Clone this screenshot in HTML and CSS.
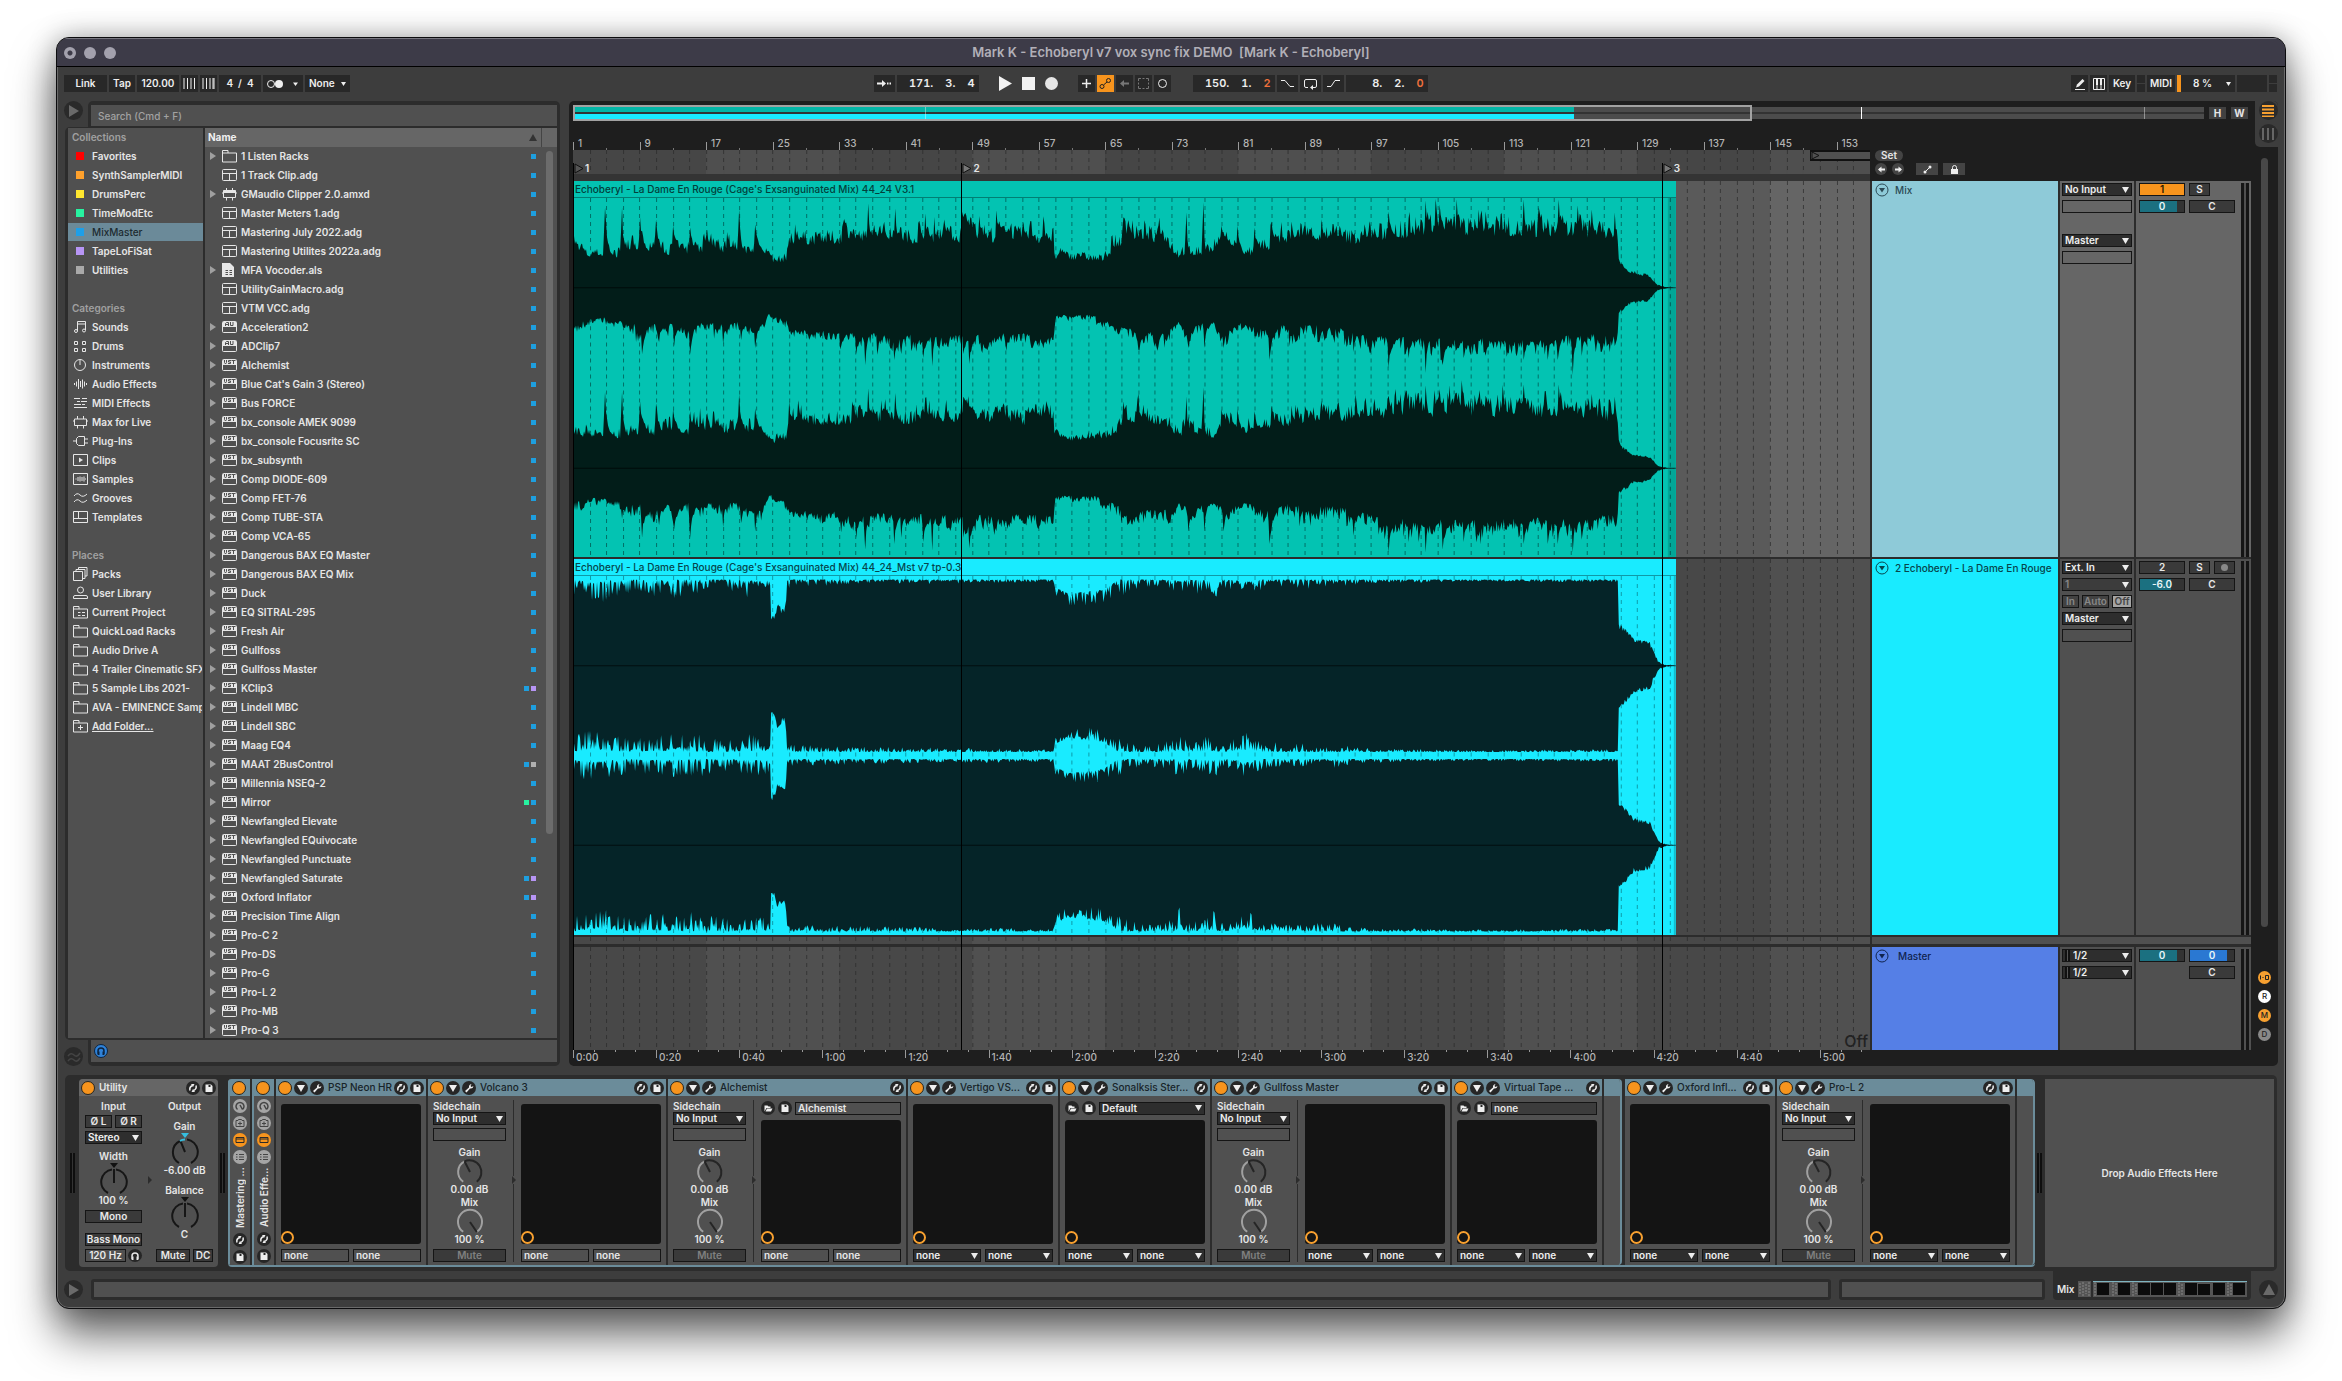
FILE: index.html
```html
<!DOCTYPE html>
<html lang="en">
<head>
<meta charset="utf-8">
<title>Mark K - Echoberyl v7 vox sync fix DEMO</title>
<link rel="stylesheet" href="styles.css">
</head>
<body>
<svg class="defs" aria-hidden="true">
  <symbol id="folder" viewBox="0 0 15 14"><path d="M.5 13V1.500h5.500v2.500h8.500V13zM.5 4H6" fill="none" stroke="currentColor"/></symbol>
  <symbol id="folder-plus" viewBox="0 0 15 14"><path d="M.5 13V1.500h5.500v2.500h8.500V13zM.5 4H6M5 8.500h5M7.500 6v5" fill="none" stroke="currentColor"/></symbol>
  <symbol id="project" viewBox="0 0 15 14"><path d="M.5 13V1.500h5.500v2.500h8.500V13zM.5 4H6M5 7.500h2.500M9 7.500h3M5 10.500h2.500M9 10.500h3" fill="none" stroke="currentColor"/></symbol>
  <symbol id="rack" viewBox="0 0 15 14"><path d="M.5 2.500q0-1 1-1h12q1 0 1 1v9q0 1-1 1h-12q-1 0-1-1zM.5 5.500h14M7.500 5.500v7" fill="none" stroke="currentColor"/></symbol>
  <symbol id="max" viewBox="0 0 15 14"><path d="M1.500 4h12v6.500h-12zM4.500 1v3M10.500 1v3M4.500 10.500v3M10.500 10.500v3M0 6h1.500M13.500 6H15" fill="none" stroke="currentColor"/></symbol>
  <symbol id="max-full" viewBox="0 0 15 14"><path d="M1.500 3.500h12v7h-12zM4.500 1v3M10.500 1v3M4.500 10.500v3M10.500 10.500v3M0 6h1.500M13.500 6H15" fill="none" stroke="currentColor"/><path d="M1.500 3.500h12V6h-12z" fill="currentColor"/></symbol>
  <symbol id="live-set" viewBox="0 0 15 14"><path d="M0 0h8l4 4v10H0z" fill="currentColor"/><path d="M3.500 7.500H6M7.500 7.500H10M3.500 9.500H6M7.500 9.500H10M3.500 11.500H6M7.500 11.500H10" stroke="#505050"/></symbol>
  <symbol id="vst" viewBox="0 0 15 14"><path d="M.5 2.500q0-1 1-1h12q1 0 1 1v9q0 1-1 1h-12q-1 0-1-1z" fill="none" stroke="currentColor"/><path d="M1 2h13v5H1z" fill="currentColor"/><path d="M2.500 2v2.500L3.500 6 4.500 4.500V2M9 2.500H6.500V4H8.500V5.500H6M9.500 2.500h4M11.500 2.500V6" fill="none" stroke="#505050"/></symbol>
  <symbol id="au" viewBox="0 0 15 14"><path d="M.5 2.500q0-1 1-1h12q1 0 1 1v9q0 1-1 1h-12q-1 0-1-1z" fill="none" stroke="currentColor"/><path d="M1 2h13v5H1z" fill="currentColor"/><path d="M3.500 6V3.500L4.500 2.500h2V6M3.500 4.500h3M8.500 2v3.500h2.500V2" fill="none" stroke="#505050"/></symbol>
  <symbol id="sounds" viewBox="0 0 15 14"><path d="M4.500 11V1.500h8V10M4.500 4h8" fill="none" stroke="currentColor"/><circle cx="3" cy="11" r="1.500" fill="none" stroke="currentColor"/><circle cx="11" cy="10.500" r="1.500" fill="none" stroke="currentColor"/></symbol>
  <symbol id="drums" viewBox="0 0 15 14"><path d="M1.500 2.500h3v3h-3zM9.500 2.500h3v3h-3zM1.500 9.500h3v3h-3zM9.500 9.500h3v3h-3z" fill="none" stroke="currentColor"/></symbol>
  <symbol id="instruments" viewBox="0 0 15 14"><circle cx="7" cy="7" r="5.500" fill="none" stroke="currentColor"/><path d="M7 1.500V7" stroke="currentColor"/></symbol>
  <symbol id="audio-fx" viewBox="0 0 15 14"><path d="M1.500 6v2M3.500 4.500v5M5.500 2v10M7.500 4v6M9.500 2.500v9M11.500 4.500v5M13.500 6v2" stroke="currentColor"/></symbol>
  <symbol id="midi-fx" viewBox="0 0 15 14"><path d="M1 2.500h6M9 2.500h5M4 5.500h3M8 5.500h6M1 8.500h7M9 8.500h3M1 11.500h13" stroke="currentColor"/></symbol>
  <symbol id="plugins" viewBox="0 0 15 14"><path d="M0 7h3.500M5.500 2.500h6v9h-6l-2-2v-5zM11.500 5H15M11.500 9H15" fill="none" stroke="currentColor"/></symbol>
  <symbol id="clips" viewBox="0 0 15 14"><path d="M.5 1.500h14v11H.5z" fill="none" stroke="currentColor"/><path d="M6 4.500L10 7 6 9.500z" fill="currentColor"/></symbol>
  <symbol id="samples" viewBox="0 0 15 14"><path d="M.5 1.500h14v11H.5zM3 6.500v1M5 5v4M7 4.500v5M9 5v4M11 4.500v5M12.500 6.500v1" fill="none" stroke="currentColor"/></symbol>
  <symbol id="grooves" viewBox="0 0 15 14"><path d="M1 5q3-4 6-1t7-1M1 11q3-4 6-1t7-1" fill="none" stroke="currentColor"/></symbol>
  <symbol id="templates" viewBox="0 0 15 14"><path d="M.5 1.500h14v11H.5zM.5 8.500h14M5.500 1.500v7" fill="none" stroke="currentColor"/></symbol>
  <symbol id="packs" viewBox="0 0 15 14"><path d="M.5 4.500h9v9h-9zM3 4.500V2.500h9v9H9.500M5.500 2.500V.5h8.500V9h-2" fill="none" stroke="currentColor"/></symbol>
  <symbol id="user" viewBox="0 0 15 14"><circle cx="7.500" cy="4" r="3" fill="none" stroke="currentColor"/><path d="M.5 12.500V11q0-1.500 1.500-1.500h11q1.500 0 1.500 1.500v1.500z" fill="none" stroke="currentColor"/></symbol>
  <symbol id="swap" viewBox="0 0 14 14"><circle cx="7" cy="7" r="7" fill="#262626"/><path d="M4 9.500Q3 6 6.500 4.500M10 4.500Q11 8 7.500 9.500" fill="none" stroke="#eee" stroke-width="1.500"/><path d="M5 3l3.500 0-1.500 3zM9 11H5.500L7 8z" fill="#eee"/></symbol>
  <symbol id="save" viewBox="0 0 14 14"><circle cx="7" cy="7" r="7" fill="#262626"/><path d="M3.500 3.500h5.500L10.500 5v6h-7z" fill="#eee"/><path d="M6.500 4h2v2h-2z" fill="#262626"/></symbol>
  <symbol id="open" viewBox="0 0 14 14"><circle cx="7" cy="7" r="7" fill="#262626"/><path d="M3.500 10.500v-6h3l1 1h2v1.500H5.500zM6 7.500h5.500L10 10.500H4.500z" fill="#eee"/></symbol>
  <symbol id="unfold" viewBox="0 0 14 14"><circle cx="7" cy="7" r="7" fill="#262626"/><path d="M3 4h8L7 11z" fill="#eee"/></symbol>
  <symbol id="wrench" viewBox="0 0 14 14"><circle cx="7" cy="7" r="7" fill="#262626"/><path d="M3 10l4-3.500Q6.500 3.500 9.500 3L8.500 5 9.500 6l2-1Q11 8 8 7.500L4.500 11.500z" fill="#eee"/></symbol>
  <symbol id="power" viewBox="0 0 14 14"><circle cx="7" cy="7" r="6.500" fill="#f7941d" stroke="#26251f"/></symbol>
  <symbol id="knob-gain" viewBox="0 0 28 28"><path d="M7.200 23.700A12 12 0 0 1 8.500 3.300" fill="none" stroke="#a0a0a0" stroke-width="2"/><path d="M8.500 3.300A12 12 0 0 1 20.800 23.700" fill="none" stroke="#252525" stroke-width="2"/><path d="M14 14L8.500 3.300" stroke="#252525" stroke-width="2"/></symbol>
  <symbol id="knob-mix" viewBox="0 0 28 28"><path d="M7.200 23.700A12 12 0 1 1 20.800 23.700" fill="none" stroke="#a0a0a0" stroke-width="2"/><path d="M14 14L20.800 24" stroke="#252525" stroke-width="2"/></symbol>
  <symbol id="knob-mid" viewBox="0 0 28 34"><path d="M10 0h8l-4 5z" fill="#111"/><path d="M8 30A12.500 12.500 0 0 1 12 6.500M20 30A12.500 12.500 0 0 0 16 6.500M14 6v14" fill="none" stroke="#161616" stroke-width="2"/></symbol>
  <symbol id="knob-out" viewBox="0 0 28 34"><path d="M10 0h8l-4 5z" fill="#36bfe0"/><path d="M8 30A12.500 12.500 0 0 1 9 8M20 30A12.500 12.500 0 0 0 16 6.500M9.500 8L14 19" fill="none" stroke="#161616" stroke-width="2"/><path d="M9 8Q11 6.500 14 6.500" fill="none" stroke="#36bfe0" stroke-width="2"/></symbol>
  <symbol id="m-dial" viewBox="0 0 14 14"><circle cx="7" cy="7" r="7" fill="#a5a5a5"/><path d="M4.500 10.500A4 4 0 1 1 9.500 10.500M7 6l2.500 4.500" fill="none" stroke="#444" stroke-width="1.500"/></symbol>
  <symbol id="m-plus" viewBox="0 0 14 14"><circle cx="7" cy="7" r="7" fill="#a5a5a5"/><path d="M3 4.500h2l.5-1h3l.5 1h2v6H3zM7 5.500v4M5 7.500h4" fill="none" stroke="#444"/></symbol>
  <symbol id="m-dev" viewBox="0 0 14 14"><circle cx="7" cy="7" r="7" fill="#f7941d"/><path d="M3 4.500h8v5H3zM3 6h8" fill="none" stroke="#2a2a2a"/></symbol>
  <symbol id="m-list" viewBox="0 0 14 14"><circle cx="7" cy="7" r="7" fill="#a5a5a5"/><path d="M3 4.500h1.500M6 4.500h5M3 7h1.500M6 7h5M3 9.500h1.500M6 9.500h5" stroke="#444"/></symbol>
  <symbol id="fold" viewBox="0 0 14 14"><circle cx="7" cy="7" r="6" fill="none" stroke="currentColor"/><path d="M4 5h6l-3 4.500z" fill="currentColor"/></symbol>
  <symbol id="phones" viewBox="0 0 14 14"><path d="M4 10.500V7a3 3 0 0 1 6 0v3.500" fill="none" stroke="currentColor" stroke-width="1.500"/><path d="M4 7.500h1.500v3.500H4zM8.500 7.500H10v3.500H8.500z" fill="currentColor"/></symbol>
</svg>

<main class="window">
  <header class="titlebar">
    <span class="lights"><i></i><i></i><i></i></span>
    <h1>Mark K - Echoberyl v7 vox sync fix DEMO&nbsp; [Mark K - Echoberyl]</h1>
  </header>

  <nav class="toolbar" aria-label="Transport">
    <div class="group">
      <button class="tb w43">Link</button><button class="tb w26">Tap</button><button class="tb w42">120.00</button>
      <button class="tb w17" aria-label="Nudge down"><svg width="13" height="11"><path d="M1 0v11M4.500 0v11M8 0v11M11.500 0v11" stroke="#eee"/></svg></button>
      <button class="tb w17" aria-label="Nudge up"><svg width="13" height="11"><path d="M1 0v11M4.500 0v11M8 0v11M11 0v11" stroke="#eee"/><path d="M12 0v11" stroke="#eee"/></svg></button>
      <button class="tb w42">4&nbsp; /&nbsp; 4</button>
      <button class="tb w40" aria-label="Metronome"><svg width="34" height="10"><circle cx="5" cy="5" r="3.500" fill="none" stroke="#eee"/><circle cx="13" cy="5" r="4" fill="#eee"/><path d="M27 3.500h5l-2.500 3.500z" fill="#eee"/></svg></button>
      <select class="tb w45 sel-small" aria-label="Quantization"><option>None</option></select>
    </div>
    <div class="group center">
      <button class="tb w21" aria-label="Follow"><svg width="15" height="9"><path d="M0 4.500h7" stroke="#eee" stroke-width="2"/><path d="M5 1l4 3.500L5 8z" fill="#eee"/><path d="M10 4.500h1.500M12.500 4.500H14" stroke="#eee" stroke-width="2"/></svg></button>
      <button class="tb w82 num"><span>171.</span><span>3.</span><span>4</span></button>
      <span class="transport">
        <button class="bare" aria-label="Play"><svg width="13" height="15"><path d="M0 0l13 7.500L0 15z" fill="#f2f2f2"/></svg></button>
        <button class="bare" aria-label="Stop"><svg width="13" height="13"><path d="M0 0h13v13H0z" fill="#f2f2f2"/></svg></button>
        <button class="bare" aria-label="Record"><svg width="13" height="13"><circle cx="6.500" cy="6.500" r="6.500" fill="#e6e6e6"/></svg></button>
      </span>
      <button class="tb w17" aria-label="Overdub"><svg width="9" height="9"><path d="M4.500 0v9M0 4.500h9" stroke="#eee" stroke-width="1.500"/></svg></button>
      <button class="tb w17 on" aria-label="Automation arm"><svg width="13" height="13"><circle cx="3" cy="9.500" r="2" fill="none" stroke="#222"/><circle cx="9.500" cy="3.500" r="2" fill="none" stroke="#222"/><path d="M4.500 8L8 5" stroke="#222"/></svg></button>
      <button class="tb w17" aria-label="Re-enable automation"><svg width="11" height="9"><path d="M3 4.500h7" stroke="#777" stroke-width="2"/><path d="M5 1L1 4.500 5 8z" fill="#777"/></svg></button>
      <button class="tb w17" aria-label="Capture"><svg width="11" height="11"><path d="M.5 3V.5H3M8 .5h2.500V3M10.500 8v2.500H8M3 10.500H.5V8M4.500.5h2M4.500 10.500h2M.5 4.500v2M10.500 4.500v2" fill="none" stroke="#777"/></svg></button>
      <button class="tb w17" aria-label="Session record"><svg width="11" height="11"><circle cx="5.500" cy="5.500" r="4" fill="none" stroke="#eee"/></svg></button>
      <button class="tb w82 num loopstart"><span>150.</span><span>1.</span><span class="red">2</span></button>
      <button class="tb w21" aria-label="Punch in"><svg width="15" height="9"><path d="M1 1.500h4l5 6h4" fill="none" stroke="#eee"/></svg></button>
      <button class="tb w21" aria-label="Loop"><svg width="15" height="12"><path d="M5 9.500H3q-1.500 0-1.500-1.500V3Q1.500 1.500 3 1.500h9q1.500 0 1.500 1.500v5q0 1.500-1.500 1.500h-3" fill="none" stroke="#eee"/><path d="M10 7v5L7 9.500z" fill="#eee"/></svg></button>
      <button class="tb w21" aria-label="Punch out"><svg width="15" height="9"><path d="M1 7.500h4l4-6h5" fill="none" stroke="#eee"/></svg></button>
      <button class="tb w82 num"><span>8.</span><span>2.</span><span class="red">0</span></button>
    </div>
    <div class="group right">
      <button class="tb w17" aria-label="Draw"><svg width="12" height="12"><path d="M1 11.500h10" stroke="#eee"/><path d="M2 9.500L3 6.500 8.500 1l2 2L5 8.500z" fill="#eee"/></svg></button>
      <button class="tb w17" aria-label="Computer keyboard"><svg width="12" height="12"><path d="M.5.5h11v11H.5zM4 6v6M8 6v6" fill="none" stroke="#eee"/><path d="M3 0h2v7H3zM7 0h2v7H7z" fill="#eee"/></svg></button>
      <button class="tb w26">Key</button>
      <button class="tb w8 split" aria-label="Key indicator"></button>
      <button class="tb w28">MIDI</button>
      <select class="tb w58 sel-small cpu" aria-label="CPU load"><option>8 %</option></select>
      <button class="tb w30" aria-label="Disk overload"></button>
      <button class="tb w8 split" aria-label="MIDI indicator"></button>
    </div>
  </nav>

  <section class="main">
    <aside class="browser">
      <div class="search-row">
        <button class="round" aria-label="Hide browser"><svg width="12" height="12"><path d="M1 0l10 6L1 12z" fill="#6a6a6a"/></svg></button>
        <div class="frame-top"><input type="search" aria-label="Search" placeholder="Search (Cmd + F)"></div>
      </div>
      <div class="lists">
        <div class="places">
          <h2>Collections</h2>
          <ul>
            <li><i class="chip red-c"></i>Favorites</li><li><i class="chip orange-c"></i>SynthSamplerMIDI</li><li><i class="chip yellow-c"></i>DrumsPerc</li><li><i class="chip green-c"></i>TimeModEtc</li><li class="picked"><i class="chip blue-c"></i>MixMaster</li><li><i class="chip purple-c"></i>TapeLoFiSat</li><li><i class="chip gray-c"></i>Utilities</li>
          </ul>
          <h2>Categories</h2>
          <ul>
            <li><svg><use href="#sounds"/></svg>Sounds</li><li><svg><use href="#drums"/></svg>Drums</li><li><svg><use href="#instruments"/></svg>Instruments</li><li><svg><use href="#audio-fx"/></svg>Audio Effects</li><li><svg><use href="#midi-fx"/></svg>MIDI Effects</li><li><svg><use href="#max"/></svg>Max for Live</li><li><svg><use href="#plugins"/></svg>Plug-Ins</li><li><svg><use href="#clips"/></svg>Clips</li><li><svg><use href="#samples"/></svg>Samples</li><li><svg><use href="#grooves"/></svg>Grooves</li><li><svg><use href="#templates"/></svg>Templates</li>
          </ul>
          <h2>Places</h2>
          <ul>
            <li><svg><use href="#packs"/></svg>Packs</li><li><svg><use href="#user"/></svg>User Library</li><li><svg><use href="#project"/></svg>Current Project</li><li><svg><use href="#folder"/></svg>QuickLoad Racks</li><li><svg><use href="#folder"/></svg>Audio Drive A</li><li><svg><use href="#folder"/></svg><span>4 Trailer Cinematic SFX</span></li><li><svg><use href="#folder"/></svg>5 Sample Libs 2021-</li><li><svg><use href="#folder"/></svg><span>AVA - EMINENCE Samp</span></li><li><svg><use href="#folder-plus"/></svg><a href="#add">Add Folder...</a></li>
          </ul>
        </div>
        <div class="files">
          <div class="files-head"><span>Name</span><i class="sort"></i><i class="corner"></i></div>
          <ul>
            <li class="x"><svg><use href="#folder"/></svg>1 Listen Racks<i class="tag"></i></li>
            <li><svg><use href="#rack"/></svg>1 Track Clip.adg<i class="tag"></i></li>
            <li class="x"><svg><use href="#max-full"/></svg>GMaudio Clipper 2.0.amxd<i class="tag"></i></li>
            <li><svg><use href="#rack"/></svg>Master Meters 1.adg<i class="tag"></i></li>
            <li><svg><use href="#rack"/></svg>Mastering July 2022.adg<i class="tag"></i></li>
            <li><svg><use href="#rack"/></svg>Mastering Utilites 2022a.adg<i class="tag"></i></li>
            <li class="x"><svg><use href="#live-set"/></svg>MFA Vocoder.als<i class="tag"></i></li>
            <li><svg><use href="#rack"/></svg>UtilityGainMacro.adg<i class="tag"></i></li>
            <li><svg><use href="#rack"/></svg>VTM VCC.adg<i class="tag"></i></li>
            <li class="x"><svg><use href="#au"/></svg>Acceleration2<i class="tag"></i></li>
            <li class="x"><svg><use href="#au"/></svg>ADClip7<i class="tag"></i></li>
            <li class="x"><svg><use href="#vst"/></svg>Alchemist<i class="tag"></i></li>
            <li class="x"><svg><use href="#vst"/></svg>Blue Cat's Gain 3 (Stereo)<i class="tag"></i></li>
            <li class="x"><svg><use href="#vst"/></svg>Bus FORCE<i class="tag"></i></li>
            <li class="x"><svg><use href="#vst"/></svg>bx_console AMEK 9099<i class="tag"></i></li>
            <li class="x"><svg><use href="#vst"/></svg>bx_console Focusrite SC<i class="tag"></i></li>
            <li class="x"><svg><use href="#vst"/></svg>bx_subsynth<i class="tag"></i></li>
            <li class="x"><svg><use href="#vst"/></svg>Comp DIODE-609<i class="tag"></i></li>
            <li class="x"><svg><use href="#vst"/></svg>Comp FET-76<i class="tag"></i></li>
            <li class="x"><svg><use href="#vst"/></svg>Comp TUBE-STA<i class="tag"></i></li>
            <li class="x"><svg><use href="#vst"/></svg>Comp VCA-65<i class="tag"></i></li>
            <li class="x"><svg><use href="#vst"/></svg>Dangerous BAX EQ Master<i class="tag"></i></li>
            <li class="x"><svg><use href="#vst"/></svg>Dangerous BAX EQ Mix<i class="tag"></i></li>
            <li class="x"><svg><use href="#vst"/></svg>Duck<i class="tag"></i></li>
            <li class="x"><svg><use href="#vst"/></svg>EQ SITRAL-295<i class="tag"></i></li>
            <li class="x"><svg><use href="#vst"/></svg>Fresh Air<i class="tag"></i></li>
            <li class="x"><svg><use href="#vst"/></svg>Gullfoss<i class="tag"></i></li>
            <li class="x"><svg><use href="#vst"/></svg>Gullfoss Master<i class="tag"></i></li>
            <li class="x"><svg><use href="#vst"/></svg>KClip3<i class="tag"></i><i class="tag purple-c"></i></li>
            <li class="x"><svg><use href="#vst"/></svg>Lindell MBC<i class="tag"></i></li>
            <li class="x"><svg><use href="#vst"/></svg>Lindell SBC<i class="tag"></i></li>
            <li class="x"><svg><use href="#vst"/></svg>Maag EQ4<i class="tag"></i></li>
            <li class="x"><svg><use href="#vst"/></svg>MAAT 2BusControl<i class="tag"></i><i class="tag gray-c"></i></li>
            <li class="x"><svg><use href="#vst"/></svg>Millennia NSEQ-2<i class="tag"></i></li>
            <li class="x"><svg><use href="#vst"/></svg>Mirror<i class="tag green-c"></i><i class="tag"></i></li>
            <li class="x"><svg><use href="#vst"/></svg>Newfangled Elevate<i class="tag"></i></li>
            <li class="x"><svg><use href="#vst"/></svg>Newfangled EQuivocate<i class="tag"></i></li>
            <li class="x"><svg><use href="#vst"/></svg>Newfangled Punctuate<i class="tag"></i></li>
            <li class="x"><svg><use href="#vst"/></svg>Newfangled Saturate<i class="tag"></i><i class="tag purple-c"></i></li>
            <li class="x"><svg><use href="#vst"/></svg>Oxford Inflator<i class="tag"></i><i class="tag purple-c"></i></li>
            <li class="x"><svg><use href="#vst"/></svg>Precision Time Align<i class="tag"></i></li>
            <li class="x"><svg><use href="#vst"/></svg>Pro-C 2<i class="tag"></i></li>
            <li class="x"><svg><use href="#vst"/></svg>Pro-DS<i class="tag"></i></li>
            <li class="x"><svg><use href="#vst"/></svg>Pro-G<i class="tag"></i></li>
            <li class="x"><svg><use href="#vst"/></svg>Pro-L 2<i class="tag"></i></li>
            <li class="x"><svg><use href="#vst"/></svg>Pro-MB<i class="tag"></i></li>
            <li class="x"><svg><use href="#vst"/></svg>Pro-Q 3<i class="tag"></i></li>
          </ul>
          <i class="thumb"></i>
        </div>
      </div>
      <div class="preview-row">
        <button class="round" aria-label="Groove pool"><svg width="14" height="12"><path d="M1 5q3-4 6-1t6-2M1 10q3-4 6-1t6-2" fill="none" stroke="#444" stroke-width="1.500"/></svg></button>
        <div class="frame-bottom"><div class="preview"><button class="phones" aria-label="Preview"><svg width="14" height="14"><use href="#phones"/></svg></button></div></div>
      </div>
    </aside>

    <section class="arrange">
      <div class="arr-body">
        <div class="overview-row">
          <div class="overview">
            <i class="ov-lane teal"></i><i class="ov-lane cyan"></i>
            <i class="ov-tick t1"></i><i class="ov-tick t2"></i><i class="ov-tick t3"></i><i class="ov-view"></i>
          </div>
          <button class="hw">H</button><button class="hw">W</button>
        </div>
        <div class="grid">
          <div class="ruler" id="bars"></div>
          <div class="scrub"><svg class="lanes" id="scrub" viewBox="0 0 1296 24" preserveAspectRatio="none"></svg></div>
          <div class="locator-tools">
            <button class="set">Set</button>
            <div class="loc-row">
              <button class="dot" aria-label="Previous locator"><svg width="11" height="11"><path d="M3 5.500h6" stroke="#eee" stroke-width="2"/><path d="M5.500 2.500L2 5.500l3.500 3z" fill="#eee"/></svg></button>
              <button class="dot" aria-label="Next locator"><svg width="11" height="11"><path d="M2 5.500h6" stroke="#eee" stroke-width="2"/><path d="M5.500 2.500L9 5.500l-3.500 3z" fill="#eee"/></svg></button>
              <button class="sq auto" aria-label="Automation mode"><svg width="9" height="9"><circle cx="2" cy="7" r="1.500" fill="#eee"/><circle cx="7" cy="2" r="1.500" fill="#eee"/><path d="M2 7l5-5" stroke="#eee"/></svg></button>
              <button class="sq" aria-label="Lock envelopes"><svg width="9" height="9"><path d="M1 4h7v5H1z" fill="#eee"/><path d="M2.500 4V2.500a2 2 0 0 1 4 0V4" fill="none" stroke="#eee"/></svg></button>
            </div>
          </div>

          <div class="lane lane1">
            <svg class="lanes" id="lane1" viewBox="0 0 1296 375" preserveAspectRatio="none"></svg>
            <div class="clip teal-clip"><span class="clip-name">Echoberyl - La Dame En Rouge (Cage's Exsanguinated Mix) 44_24 V3.1</span><svg class="wave" id="wave1" viewBox="0 0 1102 358" preserveAspectRatio="none"></svg></div>
          </div>
          <div class="head head-mix"><svg class="fold"><use href="#fold"/></svg><span>Mix</span></div>
          <div class="io sel-track">
            <select aria-label="Mix input"><option>No Input</option></select><i class="empty"></i><i class="spacer"></i>
            <select aria-label="Mix output"><option>Master</option></select><i class="empty"></i>
          </div>
          <div class="mixer sel-track">
            <div class="mx">
              <button class="box act">1</button><button class="box s">S</button><i></i>
              <button class="box vol v83">0</button><button class="box c">C</button>
            </div><i class="meter"></i>
          </div>

          <div class="lane lane2">
            <svg class="lanes" id="lane2" viewBox="0 0 1296 375" preserveAspectRatio="none"></svg>
            <div class="clip cyan-clip"><span class="clip-name">Echoberyl - La Dame En Rouge (Cage's Exsanguinated Mix) 44_24_Mst v7 tp-0.3</span><svg class="wave" id="wave2" viewBox="0 0 1102 358" preserveAspectRatio="none"></svg></div>
          </div>
          <div class="head head-cyan"><svg class="fold"><use href="#fold"/></svg><span>2 Echoberyl - La Dame En Rouge</span></div>
          <div class="io">
            <select aria-label="Track 2 input"><option>Ext. In</option></select>
            <select class="dim" aria-label="Track 2 channel"><option>1</option></select>
            <div class="monitor"><button class="box dim">In</button><button class="box dim">Auto</button><button class="box off">Off</button></div>
            <select aria-label="Track 2 output"><option>Master</option></select><i class="empty"></i>
          </div>
          <div class="mixer">
            <div class="mx">
              <button class="box">2</button><button class="box s">S</button><button class="box s" aria-label="Arm"><i class="arm"></i></button>
              <button class="box vol v70">-6.0</button><button class="box c">C</button>
            </div><i class="meter"></i>
          </div>

          <div class="strip"><svg class="lanes" id="strip" viewBox="0 0 1296 7" preserveAspectRatio="none"></svg></div>
          <div class="strip rest"></div>

          <div class="lane master">
            <svg class="lanes" id="lane3" viewBox="0 0 1296 103" preserveAspectRatio="none"></svg>
            <span class="off-label">Off</span>
          </div>
          <div class="head head-master"><svg class="fold"><use href="#fold"/></svg><span>Master</span></div>
          <div class="io">
            <select class="out" aria-label="Cue out"><option>1/2</option></select>
            <select class="out" aria-label="Master out"><option>1/2</option></select>
          </div>
          <div class="mixer">
            <div class="mx">
              <button class="box vol v83">0</button><button class="box vol blue c">0</button>
              <i></i><button class="box c">C</button>
            </div><i class="meter"></i>
          </div>
          <div class="time" id="time"></div>

          <div class="overlay" id="overlay">
            <i class="loop-brace"><svg width="10" height="9"><path d="M1 0l7 3.500L1 7z" fill="none" stroke="#111"/></svg></i>
            <div class="locator first"><svg width="10" height="11"><path d="M1 1l8 4.500L1 10z" fill="#555" stroke="#111"/></svg><span>1</span></div>
            <div class="locator second"><svg width="10" height="11"><path d="M1 1l8 4.500L1 10z" fill="#777" stroke="#111"/></svg><span>2</span></div>
            <div class="locator third"><svg width="10" height="11"><path d="M1 1l8 4.500L1 10z" fill="#777" stroke="#111"/></svg><span>3</span></div>
          </div>
        </div>
      </div>
      <div class="rail">
        <div class="views">
          <button class="round" aria-label="Arrangement view"><svg width="12" height="12"><path d="M0 1h12M0 4.500h12M0 8h12M0 11.500h12" stroke="#f7a030" stroke-width="2"/></svg></button>
          <button class="round" aria-label="Session view"><svg width="12" height="12"><path d="M1 0v12M6 0v12M11 0v12" stroke="#666" stroke-width="2"/></svg></button>
        </div>
        <i class="rail-thumb"></i>
        <button class="opt orange" aria-label="Show I/O"><svg width="13" height="13"><path d="M2.500 4.500v4M4.500 6.500h1M7.500 4.500h3v4h-3z" fill="none" stroke="#222"/></svg></button>
        <button class="opt white">R</button>
        <button class="opt orange">M</button>
        <button class="opt gray">D</button>
      </div>
    </section>
  </section>

  <section class="devices">
    <i class="lvl"></i>
    <article class="utility">
      <header><svg><use href="#power"/></svg><b>Utility</b><svg><use href="#swap"/></svg><svg><use href="#save"/></svg></header>
      <div class="u-body">
        <div class="u-col left">
          <span class="lab">Input</span>
          <div class="pair"><button class="box">Ø L</button><button class="box">Ø R</button></div>
          <select aria-label="Channel mode"><option>Stereo</option></select>
          <span class="lab up">Width</span>
          <svg class="knob tall"><use href="#knob-mid"/></svg>
          <span class="lab">100 %</span>
          <button class="box mono">Mono</button>
          <button class="box bass">Bass Mono</button>
          <div class="pair"><button class="box hz">120 Hz</button><button class="dot" aria-label="Audition"><svg width="14" height="14"><use href="#phones"/></svg></button></div>
        </div>
        <i class="divider"></i>
        <div class="u-col rightc">
          <span class="lab">Output</span>
          <span class="lab up">Gain</span>
          <svg class="knob tall"><use href="#knob-out"/></svg>
          <span class="lab">-6.00 dB</span>
          <span class="lab up">Balance</span>
          <svg class="knob tall"><use href="#knob-mid"/></svg>
          <span class="lab">C</span>
          <div class="pair end"><button class="box">Mute</button><button class="box dc">DC</button></div>
        </div>
      </div>
    </article>
    <i class="lvl"></i>

    <div class="outer-rack">
      <div class="rack-strip"><header><svg><use href="#power"/></svg></header>
        <svg><use href="#m-dial"/></svg><svg><use href="#m-plus"/></svg><svg><use href="#m-dev"/></svg><svg><use href="#m-list"/></svg>
        <b>Mastering ...</b><svg><use href="#swap"/></svg><svg><use href="#save"/></svg></div>
      <div class="rack-strip"><header><svg><use href="#power"/></svg></header>
        <svg><use href="#m-dial"/></svg><svg><use href="#m-plus"/></svg><svg><use href="#m-dev"/></svg><svg><use href="#m-list"/></svg>
        <b>Audio Effe...</b><svg><use href="#swap"/></svg><svg><use href="#save"/></svg></div>

      <article class="dev"><header><svg><use href="#power"/></svg><svg><use href="#unfold"/></svg><svg><use href="#wrench"/></svg><b>PSP Neon HR</b><svg><use href="#swap"/></svg><svg><use href="#save"/></svg></header>
        <div class="d-body"><div class="plug"><div class="pad"><i></i></div><div class="pair"><span class="field">none</span><span class="field">none</span></div></div></div></article>

      <article class="dev"><header><svg><use href="#power"/></svg><svg><use href="#unfold"/></svg><svg><use href="#wrench"/></svg><b>Volcano 3</b><svg><use href="#swap"/></svg><svg><use href="#save"/></svg></header>
        <div class="d-body"><div class="side"><span class="lab l">Sidechain</span><select aria-label="Volcano sidechain"><option>No Input</option></select><i class="empty"></i><span class="lab g">Gain</span><svg class="knob"><use href="#knob-gain"/></svg><span class="lab v">0.00 dB</span><span class="lab">Mix</span><svg class="knob"><use href="#knob-mix"/></svg><span class="lab v">100 %</span><button class="box mute">Mute</button></div><i class="divider"></i>
        <div class="plug"><div class="pad"><i></i></div><div class="pair"><span class="field">none</span><span class="field">none</span></div></div></div></article>

      <article class="dev"><header><svg><use href="#power"/></svg><svg><use href="#unfold"/></svg><svg><use href="#wrench"/></svg><b>Alchemist</b><svg><use href="#swap"/></svg></header>
        <div class="d-body"><div class="side"><span class="lab l">Sidechain</span><select aria-label="Alchemist sidechain"><option>No Input</option></select><i class="empty"></i><span class="lab g">Gain</span><svg class="knob"><use href="#knob-gain"/></svg><span class="lab v">0.00 dB</span><span class="lab">Mix</span><svg class="knob"><use href="#knob-mix"/></svg><span class="lab v">100 %</span><button class="box mute">Mute</button></div><i class="divider"></i>
        <div class="plug"><div class="preset"><svg><use href="#open"/></svg><svg><use href="#save"/></svg><span class="field">Alchemist</span></div><div class="pad"><i></i></div><div class="pair"><span class="field">none</span><span class="field">none</span></div></div></div></article>

      <article class="dev"><header><svg><use href="#power"/></svg><svg><use href="#unfold"/></svg><svg><use href="#wrench"/></svg><b>Vertigo VS...</b><svg><use href="#swap"/></svg><svg><use href="#save"/></svg></header>
        <div class="d-body"><div class="plug"><div class="pad"><i></i></div><div class="pair"><select aria-label="Vertigo X"><option>none</option></select><select aria-label="Vertigo Y"><option>none</option></select></div></div></div></article>

      <article class="dev"><header><svg><use href="#power"/></svg><svg><use href="#unfold"/></svg><svg><use href="#wrench"/></svg><b>Sonalksis Ster...</b><svg><use href="#swap"/></svg></header>
        <div class="d-body"><div class="plug"><div class="preset"><svg><use href="#open"/></svg><svg><use href="#save"/></svg><select aria-label="Sonalksis preset"><option>Default</option></select></div><div class="pad"><i></i></div><div class="pair"><select aria-label="Sonalksis X"><option>none</option></select><select aria-label="Sonalksis Y"><option>none</option></select></div></div></div></article>

      <article class="dev"><header><svg><use href="#power"/></svg><svg><use href="#unfold"/></svg><svg><use href="#wrench"/></svg><b>Gullfoss Master</b><svg><use href="#swap"/></svg><svg><use href="#save"/></svg></header>
        <div class="d-body"><div class="side"><span class="lab l">Sidechain</span><select aria-label="Gullfoss sidechain"><option>No Input</option></select><i class="empty"></i><span class="lab g">Gain</span><svg class="knob"><use href="#knob-gain"/></svg><span class="lab v">0.00 dB</span><span class="lab">Mix</span><svg class="knob"><use href="#knob-mix"/></svg><span class="lab v">100 %</span><button class="box mute">Mute</button></div><i class="divider"></i>
        <div class="plug"><div class="pad"><i></i></div><div class="pair"><select aria-label="Gullfoss X"><option>none</option></select><select aria-label="Gullfoss Y"><option>none</option></select></div></div></div></article>

      <article class="dev"><header><svg><use href="#power"/></svg><svg><use href="#unfold"/></svg><svg><use href="#wrench"/></svg><b>Virtual Tape ...</b><svg><use href="#swap"/></svg></header>
        <div class="d-body"><div class="plug"><div class="preset"><svg><use href="#open"/></svg><svg><use href="#save"/></svg><span class="field dark">none</span></div><div class="pad"><i></i></div><div class="pair"><select aria-label="Tape X"><option>none</option></select><select aria-label="Tape Y"><option>none</option></select></div></div></div></article>

      <div class="cap"><header></header></div>

      <article class="dev"><header><svg><use href="#power"/></svg><svg><use href="#unfold"/></svg><svg><use href="#wrench"/></svg><b>Oxford Infl...</b><svg><use href="#swap"/></svg><svg><use href="#save"/></svg></header>
        <div class="d-body"><div class="plug"><div class="pad"><i></i></div><div class="pair"><select aria-label="Oxford X"><option>none</option></select><select aria-label="Oxford Y"><option>none</option></select></div></div></div></article>

      <article class="dev"><header><svg><use href="#power"/></svg><svg><use href="#unfold"/></svg><svg><use href="#wrench"/></svg><b>Pro-L 2</b><svg><use href="#swap"/></svg><svg><use href="#save"/></svg></header>
        <div class="d-body"><div class="side"><span class="lab l">Sidechain</span><select aria-label="Pro-L sidechain"><option>No Input</option></select><i class="empty"></i><span class="lab g">Gain</span><svg class="knob"><use href="#knob-gain"/></svg><span class="lab v">0.00 dB</span><span class="lab">Mix</span><svg class="knob"><use href="#knob-mix"/></svg><span class="lab v">100 %</span><button class="box mute">Mute</button></div><i class="divider"></i>
        <div class="plug"><div class="pad"><i></i></div><div class="pair"><select aria-label="Pro-L X"><option>none</option></select><select aria-label="Pro-L Y"><option>none</option></select></div></div></div></article>

      <div class="cap last"><header></header></div>
    </div>
    <i class="lvl"></i>
    <div class="drop">Drop Audio Effects Here</div>
  </section>

  <footer class="status">
    <button class="round" aria-label="Info view"><svg width="12" height="12"><path d="M1 0l10 6L1 12z" fill="#6a6a6a"/></svg></button>
    <div class="msg"></div><div class="msg small"></div>
    <div class="chain"><span>Mix</span>
      <svg width="169" height="16"><path d="M0 0h13v16H0zM15 0h154v16H15z" fill="#555"/><path d="M2 2v12M5 1v14M8 3v10M11 1v14M17 1v15M35 1v14M38 2v12M55 1v14M58 3v10M101 1v14M104 3v11M150 1v14M153 3v11" stroke="#888" stroke-dasharray="2 1"/><path d="M15 .5h154" stroke="#7db4c0"/><path d="M19 2h12v12H19zM40 2h12v12H40zM60 2h12v12H60zM73 2h12v12H73zM86 2h12v12H86zM107 2h12v12H107zM120 3h12v11H120zM135 2h12v12h-12zM155 2h12v12h-12z" fill="#0c0c0c"/></svg>
    </div>
    <button class="round" aria-label="Hide detail view"><svg width="12" height="12"><path d="M6 0l6 11H0z" fill="#6a6a6a"/></svg></button>
  </footer>
</main>
<script src="app.js"></script>
</body>
</html>
```
FILE: styles.css
```css
* { box-sizing: border-box; }
html { background: #fff; }
body { margin: 0; padding: 37px 56px 72px; font: 500 10px/13px Inter, "Liberation Sans", sans-serif; color: #e6e6e6; }
button, select, input { font: inherit; color: inherit; margin: 0; padding: 0; border: 0; border-radius: 0; background: none; }
button { display: flex; align-items: center; justify-content: center; white-space: nowrap; }
h1, h2, ul { margin: 0; padding: 0; font: inherit; list-style: none; }
svg { display: block; flex: none; }
.defs { position: absolute; width: 0; height: 0; }

.window { height: calc(100vh - 109px); min-height: 1100px; display: flex; flex-direction: column; background: #3d3d3d; border: 1px solid #0c0c0e; border-radius: 13px; overflow: hidden; box-shadow: 0 26px 44px rgba(0, 0, 0, .6), 0 0 28px rgba(0, 0, 0, .3), inset 0 0 0 1px #6a6a6a; }
.titlebar { height: 29px; flex: none; position: relative; background: #3d3b48; border-top: 1px solid #77767f; border-bottom: 1px solid #000; display: flex; align-items: center; justify-content: center; }
.titlebar h1 { font-size: 13px; font-weight: 600; color: #b2b0b8; }
.lights { position: absolute; left: 7px; display: flex; gap: 8px; }
.lights i { width: 12px; height: 12px; border-radius: 50%; background: #a3a1ad; }
.lights i:first-child { background: radial-gradient(circle, #3d3b48 0 2px, #a3a1ad 3px); }

.toolbar { flex: none; padding: 8px 8px 9px 7px; display: grid; grid-template-columns: 1fr auto 1fr; }
.group { display: flex; gap: 2px; }
.group.center { margin-right: 40px; }
.group.right { justify-content: flex-end; }
.tb { height: 17px; background: #282828; color: #eee; font-weight: 600; }
.w8 { width: 8px; } .w17 { width: 17px; } .w21 { width: 21px; } .w26 { width: 26px; } .w28 { width: 28px; } .w30 { width: 30px; }
.w40 { width: 40px; } .w42 { width: 42px; } .w43 { width: 43px; } .w45 { width: 45px; } .w58 { width: 58px; } .w82 { width: 82px; }
.tb.on { background: #f7941d; }
.num { justify-content: flex-end; gap: 12px; padding-right: 4px; font-size: 11px; font-variant-numeric: tabular-nums; }
.red { color: #f0703c; }
.loopstart { margin-left: 20px; }
.transport { display: flex; gap: 10px; padding: 0 18px; align-items: center; }
.split { background: linear-gradient(#282828 8px, #3d3d3d 8px 9px, #282828 9px); }
.sel-small { appearance: none; padding-left: 4px; background: #282828 url("data:image/svg+xml,%3Csvg xmlns='http://www.w3.org/2000/svg' width='5' height='4'%3E%3Cpath d='M0 0h5L2.500 4z' fill='%23eee'/%3E%3C/svg%3E") no-repeat right 4px center; }
.cpu { border-left: 4px solid #f7941d; padding-left: 12px; }

.main { flex: 1; min-height: 0; display: grid; grid-template-columns: 496px 1fr; gap: 9px; padding: 0 7px; }
.round { width: 19px; height: 19px; border-radius: 50%; background: #2a2a2a; flex: none; }

.browser { min-height: 0; display: flex; flex-direction: column; }
.search-row, .preview-row { flex: none; display: flex; justify-content: space-between; height: 26px; }
.frame-top, .frame-bottom { width: 472px; background: #2c2c2c; }
.frame-top { border-radius: 5px 5px 0 0; padding: 4px 3px 0; }
.frame-top input { appearance: none; display: block; width: 100%; height: 21px; background: #505050; padding: 0 7px; }
.frame-top input::placeholder { color: #a2a2a2; opacity: 1; }
.lists { flex: 1; min-height: 0; margin-left: 1px; background: #2c2c2c; border-radius: 5px 0 0 5px; padding: 1px 3px 2px; display: grid; grid-template-columns: 135px 1fr; gap: 2px; }
.places, .files { background: #505050; overflow: hidden; position: relative; min-height: 0; }
.places h2 { height: 19px; line-height: 18px; padding-left: 4px; color: #a0a0a0; font-weight: 600; }
.places ul + h2 { margin-top: 19px; }
.places li, .files li { height: 19px; display: flex; align-items: center; white-space: nowrap; padding-bottom: 1px; font-weight: 600; }
.places li { padding-left: 5px; gap: 4px; padding-right: 1px; }
.places li span { overflow: hidden; }
.places li svg, .files li svg { width: 15px; height: 14px; }
.places .picked { background: linear-gradient(#6b8a99 18px, transparent 18px); color: #1d2a30; font-weight: 500; }
.places a { color: inherit; }
.chip { width: 8px; height: 8px; margin: 0 4px 0 3px; background: #1e9fe8; }
.red-c { background: #f00; } .orange-c { background: #ffa12c; } .yellow-c { background: #ffe72f; } .green-c { background: #27f2a0; } .purple-c { background: #b795f5; } .gray-c { background: #a9a9a9; }
.files-head { height: 19px; background: #666; display: flex; align-items: center; padding-left: 3px; font-weight: 700; color: #f0f0f0; }
.files-head span { flex: 1; }
.sort { border: 4px solid transparent; border-top: 0; border-bottom: 7px solid #333; margin-right: 4px; }
.corner { width: 16px; height: 19px; border-left: 1px solid #444; }
.files li { padding: 0 21px 1px 17px; gap: 2px; }
.files li svg { margin-right: 2px; }
.files li.x { padding-left: 5px; }
.files li.x::before { content: ""; border: 4px solid transparent; border-right: 0; border-left: 6px solid #a0a0a0; margin-right: 4px; }
.tag { width: 5px; height: 5px; background: #1e9fdf; order: 2; }
.tag.purple-c { background: #b795f5; } .tag.gray-c { background: #b0b0b0; } .tag.green-c { background: #27f2a0; }
.tag:first-of-type { margin-left: auto; }
.thumb { position: absolute; right: 4px; top: 23px; width: 7px; height: 75%; border-radius: 4px; background: #6c6c6c; }
.preview-row .round { margin-top: 7px; }
.frame-bottom { border-radius: 0 0 5px 5px; padding: 0 3px 3px; }
.preview { height: 22px; background: #505050; padding: 4px 3px; }
.phones { width: 14px; height: 14px; border-radius: 50%; background: #2f82d8; color: #0d2440; border: 1px solid #0d2440; }

.arrange { min-width: 0; display: flex; background: #1e1e1e; border-radius: 5px; overflow: hidden; }
.arr-body { flex: 1; min-width: 0; display: flex; flex-direction: column; padding: 4px 4px 0 4px; }
.overview-row { display: flex; height: 16px; align-items: center; gap: 5px; padding-right: 3px; flex: none; }
.overview { flex: 1; height: 12px; position: relative; background: linear-gradient(#4c4c4c 5px, #333 5px 7px, #4c4c4c 7px); }
.ov-lane { position: absolute; left: 0; width: 61.400%; height: 5px; top: 0; background: #03b5a6; }
.ov-lane.cyan { top: 7px; background: #19ebff; }
.ov-view { position: absolute; left: 0; top: -2px; width: 72.300%; height: 16px; border: 2px solid #a2a2a2; }
.ov-tick { position: absolute; top: 0; width: 1px; height: 12px; background: #fff; }
.t1 { left: 21.600%; opacity: .4; } .t2 { left: 79%; } .t3 { left: 96.300%; opacity: .4; }
.hw { width: 17px; height: 12px; background: #414141; font-weight: 700; }

.grid { flex: 1; min-height: 0; display: grid; column-gap: 2px; grid-template-columns: minmax(0, 1fr) 186px 74px 115px; grid-template-rows: 29px 31px minmax(0, 1fr) 2px minmax(0, 1fr) 2px 7px 3px 103px 16px; background: linear-gradient(#1e1e1e 60px, #2c2c2c 60px calc(100% - 16px), #1e1e1e calc(100% - 16px)); }
.ruler, .scrub, .time, .lane, .strip { grid-column: 1; position: relative; overflow: hidden; }
.lane, .strip { background: #4c4c4c; }
.ruler { grid-row: 1; color: #b4b4b4; }
.ruler span, .time span { position: absolute; padding-left: 4px; border-left: 1px solid #999; height: 8px; white-space: nowrap; }
.ruler span { bottom: 0; line-height: 3px; }
.ruler i { position: absolute; bottom: 0; width: 1px; height: 2px; background: #777; }
.scrub { grid-row: 2; background: #343434; }
.scrub .lanes { height: 24px; }
.lanes { position: absolute; left: 0; top: 0; width: 100%; height: 100%; }
.locator-tools { grid-column: 2 / -1; grid-row: 1 / 3; padding: 29px 0 0 3px; }
.set { width: 28px; height: 11px; border-radius: 6px; background: #444; font-weight: 600; }
.loc-row { display: flex; align-items: center; gap: 5px; margin-top: 2px; }
.dot { width: 12px; height: 12px; border-radius: 50%; background: #444; }
.sq { width: 22px; height: 12px; background: #444; }
.sq.auto { margin-left: 7px; }
.lane1, .head-mix, .head-mix ~ .sel-track { grid-row: 3; }
.lane2, .head-cyan, .head-cyan ~ .io, .head-cyan ~ .mixer { grid-row: 5; }
.strip { grid-row: 7; }
.strip.rest { grid-column: 2 / -1; background: #505050; }
.lane.master, .head-master, .head-master ~ .io, .head-master ~ .mixer { grid-row: 9; }
.head { grid-column: 2; display: flex; gap: 6px; padding: 2px 3px; white-space: nowrap; overflow: hidden; line-height: 14px; }
.head .fold { width: 14px; height: 14px; }
.head-mix { background: #8ecad8; color: #2b4a55; }
.head-cyan { background: #19ebff; color: #06454c; }
.head-master { background: #557fe6; color: #10244f; gap: 9px; }
.io { grid-column: 3; background: #505050; padding: 2px; display: flex; flex-direction: column; gap: 4px; font-weight: 600; }
.mixer { grid-column: 4; background: #505050; display: flex; padding: 2px 2px 0 3px; justify-content: space-between; font-weight: 600; }
.sel-track { background: #666; }
.mx { display: grid; grid-template-columns: 46px 21px 21px; grid-auto-rows: 13px; gap: 4px; }
.mx .c { grid-column: 2 / 4; }
.meter { width: 8px; border: solid #151515; border-width: 0 3px; background: #505050; }
.spacer { height: 13px; }

.box, .empty, .io select, .dev select, .utility select, .field { height: 13px; border: 1px solid #151515; line-height: 11px; width: 100%; flex: none; }
.box { background: #3a3a3a; color: #e8e8e8; overflow: hidden; }
.empty { display: block; background: transparent; }
.io select, .dev select, .utility select { appearance: none; display: block; padding-left: 2px; color: #eee; background: #2e2e2e url("data:image/svg+xml,%3Csvg xmlns='http://www.w3.org/2000/svg' width='7' height='6'%3E%3Cpath d='M0 0h7L3.500 6z' fill='%23eee'/%3E%3C/svg%3E") no-repeat right 2px center; }
.io select.dim { color: #888; background-color: #3c3c3c; }
.io select.out { padding-left: 10px; box-shadow: inset 2px 0 #2e2e2e, inset 4px 0 #111, inset 5px 0 #555, inset 7px 0 #111; }
.box.act { background: #f7941d; color: #2a1a00; }
.box.vol { color: #e8f6f8; background: linear-gradient(90deg, #1b7080 83%, #333 83%); }
.box.v70 { background: linear-gradient(90deg, #1b7080 70%, #333 70%); }
.box.blue { background: linear-gradient(90deg, #2a78d2 83%, #333 83%); }
.arm { width: 7px; height: 7px; border-radius: 50%; background: #888; }
.monitor { display: grid; grid-template-columns: 17px 27px 20px; gap: 3px; }
.box.dim { color: #888; background: #424242; }
.box.off { background: #a5a5a5; color: #444; }

.clip { position: absolute; left: 0; top: 0; width: 85.030%; height: 100%; display: flex; flex-direction: column; }
.clip-name { flex: none; height: 17px; line-height: 17px; padding-left: 2px; white-space: nowrap; border-bottom: 1px solid rgba(0, 0, 0, .35); overflow: hidden; }
.wave { width: 100%; flex: 1; min-height: 0; }
.teal-clip { background: #03c3b2; color: #023f3b; }
.cyan-clip { background: #19ebff; color: #06454c; }
.off-label { position: absolute; right: 2px; bottom: 0; font-size: 16px; line-height: 18px; color: #222; }
.time { grid-row: 10; color: #b4b4b4; }
.time span { top: 0; line-height: 15px; padding-left: 2px; }
.time i { position: absolute; top: 0; width: 1px; height: 2px; background: #999; }
.overlay { grid-column: 1; grid-row: 2 / 10; position: relative; pointer-events: none; }
.loop-brace { position: absolute; top: 0; right: 0; width: 4.600%; height: 11px; border: solid #111; border-width: 2px 0 2px 1px; overflow: hidden; background: #505050; }
.locator { position: absolute; top: 13px; bottom: 0; display: flex; gap: 1px; line-height: 11px; border-left: 1px solid #000; font-weight: 600; }
.locator.first { left: 0; }
.locator.second { left: 29.950%; }
.locator.third { left: 83.950%; }

.rail { width: 23px; flex: none; display: flex; flex-direction: column; align-items: center; padding-bottom: 19px; padding-right: 4px; }
.views { width: 23px; height: 46px; background: #3d3d3d; border-radius: 0 0 0 5px; display: flex; flex-direction: column; align-items: center; gap: 4px; flex: none; margin-right: -4px; padding-left: 3px; }
.rail-thumb { width: 7px; flex: 1; margin: 11px 0 44px; border-radius: 4px; background: #484848; }
.opt { width: 13px; height: 13px; border-radius: 50%; flex: none; margin-bottom: 6px; font-size: 8px; color: #222; }
.opt.orange { background: #f7a030; } .opt.white { background: #fff; } .opt.gray { background: #888; }

.devices { flex: none; height: 196px; margin: 9px 8px 0; background: #2c2c2c; border-radius: 5px; padding: 4px 3px; display: flex; font-weight: 600; }
.lvl { width: 5px; height: 40px; flex: none; align-self: center; margin: 0 3px 0 2px; border: solid #0e0e0e; border-width: 0 2px; background: #333; }
.utility { width: 139px; margin-left: 1px; flex: none; background: #505050; border-radius: 4px; overflow: hidden; }
.devices header { height: 17px; display: flex; align-items: center; gap: 2px; padding: 0 2px; flex: none; }
.devices header svg, .rack-strip svg, .preset svg { width: 14px; height: 14px; }
.devices header b { flex: 1; font-weight: 500; padding-left: 2px; white-space: nowrap; overflow: hidden; }
.utility header { background: #666; }
.utility header b { font-weight: 600; }
.u-body { display: flex; justify-content: space-between; padding: 4px 6px; height: 171px; }
.u-col { display: flex; flex-direction: column; align-items: center; height: 162px; width: 57px; flex: none; }
.lab { height: 13px; line-height: 13px; white-space: nowrap; }
.pair { display: flex; gap: 3px; width: 100%; }
.pair > .box, .pair > .field, .dev .pair > select { flex: 1; width: 0; min-width: 0; }
.u-col .pair + select { margin-top: 3px; }
.left .pair:nth-child(2) { margin-top: 2px; }
.left .up { margin-top: 6px; }
.left .mono { margin-top: 3px; }
.left .bass { margin-top: auto; }
.left .bass + .pair { margin-top: 3px; gap: 2px; }
.left .hz { background: #505050; }
.left .dot { width: 14px; height: 13px; background: #262626; flex: none; }
.rightc .up { margin-top: 7px; }
.rightc .end { margin-top: auto; }
.pair > .dc { flex: none; width: 20px; }
.knob { width: 28px; height: 28px; margin: -1px 0 0; }
.knob.tall { height: 34px; margin: 0 0 -3px; }
.divider { width: 1px; margin: 0 7px; background: #2c2c2c; position: relative; }
.divider::after { content: ""; position: absolute; left: -1px; top: 76px; border: 4px solid transparent; border-left-color: #2c2c2c; border-right: 0; background: #505050; }

.outer-rack { display: flex; gap: 2px; background: #2c2c2c; border-bottom: 2px solid #6b8c9a; border-radius: 4px; overflow: hidden; flex: none; }
.rack-strip { width: 22px; background: #505050; border-left: 2px solid #6b8c9a; display: flex; flex-direction: column; align-items: center; gap: 3px; padding-bottom: 2px; }
.rack-strip header { width: 22px; margin-left: -2px; padding: 0 4px; background: #6b8c9a; }
.rack-strip b { writing-mode: vertical-rl; transform: rotate(180deg); font-weight: 600; height: 68px; line-height: 14px; white-space: nowrap; padding-top: 2px; }
.dev { background: #505050; display: flex; flex-direction: column; }
.dev header, .cap header { background: #6b8c9a; color: #182429; }
.dev header b { width: 0; }
.d-body { flex: 1; display: flex; padding: 4px 5px 3px; }
.side { width: 73px; display: flex; flex-direction: column; align-items: center; }
.side .l { align-self: flex-start; margin-bottom: -1px; }
.side .empty { margin-top: 3px; }
.side .g { margin-top: 5px; }
.side .v { margin-top: -3px; }
.side .mute { margin-top: auto; color: #808080; }
.plug { width: 140px; display: flex; flex-direction: column; gap: 5px; padding-top: 4px; }
.preset { display: flex; align-items: center; gap: 3px; margin: -3px 0 0; }
.preset .field, .preset select { width: 106px; }
.plug .pair { gap: 4px; }
.field { padding-left: 2px; color: #e8e8e8; display: block; }
.field.dark { background: #3c3c3c; }
.pad { flex: 1; background: #141414; border-radius: 3px; display: flex; align-items: flex-end; }
.pad i { width: 13px; height: 13px; border: 2px solid #f7a030; border-radius: 50%; }
.cap { width: 18px; background: #505050; border-right: 2px solid #6b8c9a; margin-right: 1px; border-radius: 0 4px 4px 0; overflow: hidden; }
.cap.last { margin-right: 0; }
.drop { flex: 1; background: #505050; display: flex; align-items: center; justify-content: center; }

.status { flex: none; height: 37px; display: flex; padding: 8px 7px 8px; align-items: flex-start; }
.status .round { margin: 1px 8px 0 0; }
.msg { flex: 1; height: 21px; background: #505050; border: 3px solid #2c2c2c; border-radius: 3px; margin-right: 8px; }
.msg.small { flex: none; width: 206px; }
.chain { width: 198px; height: 29px; margin: -8px 8px 0 0; background: #2c2c2c; border-radius: 0 0 4px 4px; display: flex; align-items: center; justify-content: space-between; padding: 7px 4px 0 4px; font-weight: 600; }
.status .chain + .round { margin-right: 0; }
```
FILE: app.js
```js
const NS = 'http://www.w3.org/2000/svg';
const WIDTH = 1296;
const BAR = 66.45 / 8;

function add(parent, name, attrs) {
  const el = document.createElementNS(NS, name);
  for (const key in attrs) el.setAttribute(key, attrs[key]);
  parent.appendChild(el);
}

// Background shading, sixteen bars per block, with dashed two-bar lines.
function drawLanes(id, h, dark, light) {
  const svg = document.getElementById(id);
  for (let i = 0; i * 16 * BAR < WIDTH; i++) {
    add(svg, 'rect', { x: i * 16 * BAR, y: 0, width: 16 * BAR + 1, height: h, fill: i % 2 ? light : dark });
  }
  drawDashes(svg, WIDTH, h, '#2b2b2b');
}
function drawDashes(svg, w, h, color) {
  for (let x = 2 * BAR; x < w; x += 2 * BAR) {
    const px = Math.round(x) + 0.5;
    add(svg, 'path', { d: `M${px} 0V${h}`, stroke: color, 'stroke-dasharray': '4 4', opacity: 0.7 });
  }
}
drawLanes('scrub', 24, '#464646', '#4f4f4f');
drawLanes('lane1', 375, '#5a5a5a', '#656565');
drawLanes('lane2', 375, '#484848', '#505050');
drawLanes('strip', 7, '#484848', '#505050');
drawLanes('lane3', 103, '#484848', '#505050');

function mark(parent, tag, x, text) {
  const el = document.createElement(tag);
  el.style.left = (x / WIDTH * 100) + '%';
  if (text) el.textContent = text;
  parent.appendChild(el);
}
const bars = document.getElementById('bars');
for (let i = 0; i < 20; i++) {
  mark(bars, 'span', i * 8 * BAR, String(i * 8 + 1));
  mark(bars, 'i', (i * 8 + 4) * BAR);
}
const time = document.getElementById('time');
for (let i = 0; i < 16; i++) {
  const s = i * 20;
  mark(time, 'span', i * 83.06, Math.floor(s / 60) + ':' + String(s % 60).padStart(2, '0'));
  for (let k = 1; k < 4; k++) mark(time, 'i', i * 83.06 + k * 20.76);
}

// Waveform peaks: [x, low, high] envelope points plus [x, peak, decay] transients.
let seed = 7;
const rnd = () => (seed = (seed * 16807) % 2147483647) / 2147483647;
function envelope(points, x) {
  let i = 1;
  while (i < points.length - 1 && points[i][0] < x) i++;
  const a = points[i - 1], b = points[i];
  const t = Math.min(1, Math.max(0, (x - a[0]) / (b[0] - a[0])));
  return [a[1] + (b[1] - a[1]) * t, a[2] + (b[2] - a[2]) * t];
}
function side(points, hits, power, beat) {
  const out = [];
  let swell = 0;
  for (let x = 0; x <= 1102; x++) {
    const [lo, hi] = envelope(points, x);
    if (beat && rnd() < 0.1) swell = 0.4 + rnd() * 0.7;
    swell *= 0.8;
    let v = lo + (hi - lo) * (Math.pow(rnd(), power) * (beat ? 0.75 : 1) + swell);
    for (const [hx, peak, decay] of hits) {
      const d = x - hx;
      if (d >= -1 && d < decay * 4) v = Math.max(v, d < 0 ? peak * 0.7 : lo + (peak - lo) * Math.exp(-d / decay) * (0.75 + (d ? rnd() : 1) * 0.25));
    }
    out.push(v);
  }
  return out;
}
function drawWave(svg, mid, up, down, fill) {
  let d = `M0 ${mid}`;
  up.forEach((v, x) => { d += `L${x} ${(mid - v).toFixed(1)}`; });
  for (let x = 1102; x >= 0; x--) d += `L${x} ${(mid + down[x]).toFixed(1)}`;
  add(svg, 'path', { d: d + 'z', fill });
  add(svg, 'path', { d: `M0 ${mid}H1102`, stroke: '#000', opacity: 0.6 });
}
const tail = [[1043, 44, 62], [1044, 40, 46], [1045, 22, 27], [1052, 17, 21], [1060, 12, 15], [1074, 11, 14], [1079, 7, 9], [1084, 2, 3], [1092, 0, 1], [1102, 0, 0]];
const topEnv = [[0, 34, 50], [15, 29, 38], [25, 29, 38], [60, 30, 46], [110, 32, 54], [150, 34, 50], [190, 32, 44], [200, 24, 32], [213, 26, 38], [215, 42, 60], [300, 44, 64], [386, 44, 62], [390, 58, 74], [400, 56, 74], [405, 44, 66], [480, 42, 66], [481, 28, 38], [532, 26, 36], [545, 36, 56], [550, 44, 66], [586, 42, 66], [605, 29, 46], [612, 33, 50], [640, 30, 42], [650, 45, 60], [672, 30, 42], [690, 36, 56], [720, 42, 60], [800, 44, 66], [815, 48, 76], [900, 50, 76], [1000, 50, 74], ...tail];
const lowEnv = [[0, 34, 54], [15, 29, 36], [30, 29, 36], [60, 35, 52], [120, 33, 48], [190, 34, 46], [197, 24, 30], [213, 32, 44], [216, 42, 52], [260, 42, 54], [280, 44, 60], [390, 46, 60], [402, 44, 62], [480, 46, 58], [482, 27, 34], [520, 27, 34], [545, 36, 52], [560, 42, 60], [596, 40, 56], [605, 33, 38], [615, 38, 56], [640, 33, 38], [650, 40, 56], [672, 33, 38], [690, 42, 62], [710, 35, 54], [765, 38, 56], [812, 48, 64], [900, 50, 70], [960, 48, 62], [1010, 46, 64], ...tail];
const topHits = [[32, 80, 3], [49, 80, 2], [67, 70, 5], [83, 68, 4], [100, 62, 5], [117, 60, 4], [134, 58, 4], [166, 78, 2], [182, 63, 5], [295, 84, 2], [322, 79, 2], [352, 74, 2], [391, 73, 6], [550, 70, 3], [613, 75, 1], [630, 85, 1], [648, 62, 4], [664, 62, 3], [681, 60, 4], [698, 66, 4], [718, 66, 3], [815, 76, 4], [852, 87, 2], [866, 83, 4], [912, 76, 2], [950, 88, 2], [985, 88, 2], [1018, 78, 2], [1041, 75, 2]];
const lowHits = [[69, 66, 4], [86, 54, 3], [101, 58, 5], [117, 66, 4], [150, 56, 2], [168, 52, 3], [182, 60, 3], [283, 66, 4], [292, 77, 2], [321, 72, 3], [328, 66, 2], [350, 70, 4], [359, 78, 1], [390, 66, 5], [396, 76, 4], [615, 60, 3], [631, 60, 2], [650, 60, 3], [696, 72, 4], [780, 64, 3], [815, 80, 4], [835, 70, 3], [852, 85, 2], [869, 77, 5], [890, 70, 4], [950, 72, 4], [974, 72, 3], [984, 72, 3], [999, 87, 2], [1008, 68, 3]];

const wave1 = document.getElementById('wave1');
drawDashes(wave1, 1102, 358, '#024f49');
drawWave(wave1, 89.5, side(topEnv, topHits, 1.4, true), side(lowEnv, lowHits, 1.4, true), '#021d19');
drawWave(wave1, 269.5, side(topEnv, topHits.map(([x, p, d]) => [x, p * 0.95, d]), 1.6, true), side(lowEnv, lowHits.map(([x, p, d]) => [x, Math.min(84, p * 1.05), d]), 1.6, true), '#021d19');
add(wave1, 'rect', { x: 1094, y: 0, width: 8, height: 358, fill: '#000', opacity: 0.15 });

// The mastered clip sits against its ceiling, so store how far it falls short of it.
const gap = [[0, 0, 17], [20, 3, 24], [35, 1, 22], [60, 0, 12], [75, 1, 17], [115, 0, 20], [160, 0, 12], [170, 1, 19], [197, 1, 15], [198, 38, 44], [202, 34, 38], [204, 24, 30], [211, 30, 36], [213, 20, 24], [214, 1, 10], [220, 0, 7], [330, 0, 5], [400, 0, 4], [480, 0, 3], [482, 8, 16], [495, 14, 26], [530, 10, 26], [545, 0, 18], [570, 0, 7], [600, 0, 12], [606, 2, 24], [614, 0, 10], [640, 1, 22], [650, 0, 9], [675, 2, 21], [690, 0, 10], [760, 0, 9], [790, 0, 4], [900, 0, 2], [1043, 0, 3], [1044, 1, 3], [1045, 44, 49], [1052, 49, 54], [1060, 59, 64], [1076, 62, 66], [1080, 72, 76], [1085, 82, 84], [1092, 85, 86], [1102, 86, 86]];
const limited = () => side(gap, [], 2.6).map(v => Math.max(0, 86 - v));
const wave2 = document.getElementById('wave2');
drawDashes(wave2, 1102, 358, '#0b7c88');
drawWave(wave2, 89.5, limited(), limited(), '#052428');
drawWave(wave2, 268.5, limited(), limited(), '#052428');
add(wave2, 'rect', { x: 1100, y: 0, width: 2, height: 358, fill: '#000', opacity: 0.2 });
```
